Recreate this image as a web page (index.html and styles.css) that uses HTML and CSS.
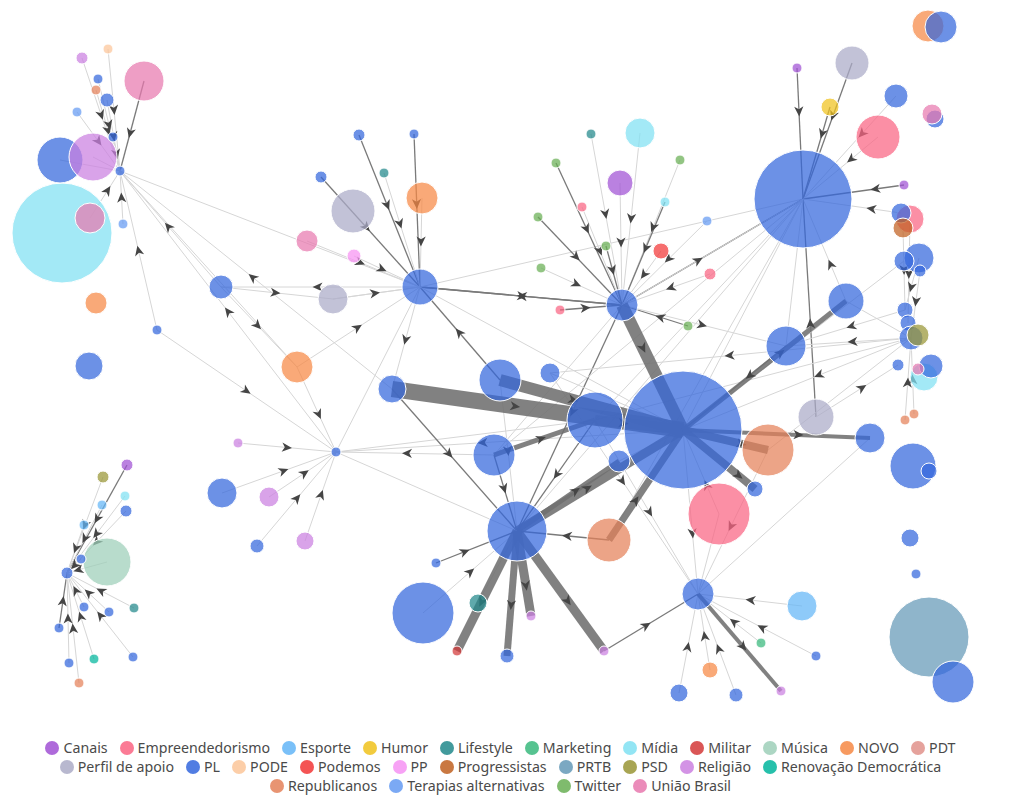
FILE: index.html
```html
<!DOCTYPE html>
<html lang="pt">
<head>
<meta charset="utf-8">
<title>Rede</title>
<link rel="stylesheet" href="styles.css">
</head>
<body>
<div class="page">
  <svg id="graph" class="graph" width="1015" height="737" viewBox="0 0 1015 737" xmlns="http://www.w3.org/2000/svg">
    <g id="edges"></g>
    <g id="arrows"></g>
    <g id="nodes"></g>
  </svg>
  <div class="legend">
    <div class="legend-row row1">
      <span class="item"><i class="dot canais"></i>Canais</span>
      <span class="item"><i class="dot emp"></i>Empreendedorismo</span>
      <span class="item"><i class="dot esp"></i>Esporte</span>
      <span class="item"><i class="dot humor"></i>Humor</span>
      <span class="item"><i class="dot life"></i>Lifestyle</span>
      <span class="item"><i class="dot mkt"></i>Marketing</span>
      <span class="item"><i class="dot midia"></i>Mídia</span>
      <span class="item"><i class="dot mil"></i>Militar</span>
      <span class="item"><i class="dot mus"></i>Música</span>
      <span class="item"><i class="dot novo"></i>NOVO</span>
      <span class="item"><i class="dot pdt"></i>PDT</span>
    </div>
    <div class="legend-row row2">
      <span class="item"><i class="dot perfil"></i>Perfil de apoio</span>
      <span class="item"><i class="dot pl"></i>PL</span>
      <span class="item"><i class="dot pode"></i>PODE</span>
      <span class="item"><i class="dot podemos"></i>Podemos</span>
      <span class="item"><i class="dot pp"></i>PP</span>
      <span class="item"><i class="dot prog"></i>Progressistas</span>
      <span class="item"><i class="dot prtb"></i>PRTB</span>
      <span class="item"><i class="dot psd"></i>PSD</span>
      <span class="item"><i class="dot rel"></i>Religião</span>
      <span class="item"><i class="dot renov"></i>Renovação Democrática</span>
    </div>
    <div class="legend-row row3">
      <span class="item"><i class="dot rep"></i>Republicanos</span>
      <span class="item"><i class="dot ter"></i>Terapias alternativas</span>
      <span class="item"><i class="dot tw"></i>Twitter</span>
      <span class="item"><i class="dot uniao"></i>União Brasil</span>
    </div>
  </div>
</div>
<script src="script.js"></script>
</body>
</html>
```
FILE: styles.css
```css
html, body {
  margin: 0;
  padding: 0;
  background: #ffffff;
}
.page {
  width: 1015px;
  height: 803px;
  overflow: hidden;
  font-family: "Noto Sans", "Open Sans", sans-serif;
}
.graph {
  display: block;
}
.edge-light { stroke: #d6d6d6; stroke-width: 1; fill: none; }
.edge-dark { stroke: #7a7a7a; stroke-width: 1.3; fill: none; }
.edge-thick { stroke: #707070; fill: none; opacity: 0.88; }
.arrow { fill: #454545; }
.node { stroke: #ffffff; stroke-width: 1; fill-opacity: 0.72; }

.legend {
  display: flex;
  flex-direction: column;
  align-items: center;
  color: #4a4a4a;
  font-size: 14.2px;
  line-height: 19px;
  padding-top: 1px;
}
.legend-row {
  display: flex;
  gap: 12px;
  justify-content: center;
  white-space: nowrap;
  margin-left: -14px;
}
.item {
  display: flex;
  align-items: center;
  gap: 4px;
}
.dot {
  display: inline-block;
  width: 14px;
  height: 14px;
  border-radius: 50%;
  opacity: 0.85;
}
.canais { background: #a050d4; }
.emp { background: #fa6482; }
.esp { background: #63b5f7; }
.humor { background: #f0c21c; }
.life { background: #21888b; }
.mkt { background: #38b97c; }
.midia { background: #80e0f2; }
.mil { background: #d33838; }
.mus { background: #9dcfb9; }
.novo { background: #f68844; }
.pdt { background: #e0928b; }
.perfil { background: #ababc7; }
.pl { background: #3366dd; }
.pode { background: #fcc599; }
.podemos { background: #f23636; }
.pp { background: #f692f3; }
.prog { background: #c06020; }
.prtb { background: #6499b7; }
.psd { background: #999535; }
.rel { background: #cb80e0; }
.renov { background: #00b59c; }
.rep { background: #e48159; }
.ter { background: #649af2; }
.tw { background: #68af53; }
.uniao { background: #e878ae; }
```
FILE: script.js
```js
(function () {
  var COLORS = {
    canais: '#a050d4', emp: '#fa6482', esp: '#63b5f7', humor: '#f0c21c',
    life: '#21888b', mkt: '#38b97c', midia: '#80e0f2', mil: '#d33838',
    mus: '#9dcfb9', novo: '#f68844', pdt: '#e0928b', perfil: '#ababc7',
    pl: '#3366dd', pode: '#fcc599', podemos: '#f23636', pp: '#f692f3',
    prog: '#c06020', prtb: '#6499b7', psd: '#999535', rel: '#cb80e0',
    renov: '#00b59c', rep: '#e48159', ter: '#649af2', tw: '#68af53',
    uniao: '#e878ae'
  };

  var NODES = [
    ['l1',62,233,50,'midia'],['l2',60,160,23,'pl'],['l3',93,157,24,'rel'],['l4',90,218,15,'uniao'],
    ['l0',120,171,5,'pl'],['l5',144,81,20,'uniao'],['l6',82,58,6,'rel'],['l7',108,49,5,'pode'],
    ['l8',98,79,5,'pl'],['l9',96,90,5,'rep'],['l10',107,100,7,'pl'],['l11',77,112,5,'ter'],
    ['l12',113,137,5,'pl'],['l13',123,224,5,'ter'],['l14',96,303,11,'novo'],['l15',157,330,5,'pl'],
    ['l16',89,366,14,'pl'],
    ['a',420,287,18,'pl'],['a1',333,299,15,'perfil'],['a2',307,241,11,'uniao'],['a3',354,256,7,'pp'],
    ['a4',353,211,22,'perfil'],['a5',321,177,6,'pl'],['a6',359,135,6,'pl'],['a7',414,134,5,'pl'],
    ['a8',384,173,5,'life'],['a9',422,198,16,'novo'],['a10',221,287,12,'pl'],['a11',297,367,16,'novo'],
    ['g',336,452,5,'pl'],['g1',238,443,5,'rel'],['g2',222,493,15,'pl'],['g3',269,497,10,'rel'],
    ['g4',257,546,7,'pl'],['g5',305,541,9,'rel'],
    ['m1',392,389,14,'pl'],['m2',500,380,21,'pl'],['m3',550,373,10,'pl'],['m4',595,420,28,'pl'],
    ['c',683,430,59,'pl'],['m5',494,455,21,'pl'],['m6',619,461,11,'pl'],['f',517,531,30,'pl'],
    ['f1',436,563,5,'pl'],['f2',423,613,31,'pl'],['f3',478,603,9,'life'],['f4',457,651,5,'mil'],
    ['f5',507,656,7,'pl'],['f6',531,616,5,'rel'],['f7',604,651,5,'rel'],['f8',609,540,22,'rep'],
    ['c1',719,514,31,'emp'],['c2',768,450,26,'rep'],['c3',755,489,8,'pl'],['c4',816,417,18,'perfil'],
    ['c5',870,438,15,'pl'],['c6',786,346,20,'pl'],['c7',846,301,18,'pl'],
    ['e',698,594,16,'pl'],['e1',802,606,15,'esp'],['e2',761,643,5,'mkt'],['e3',816,656,5,'pl'],
    ['e4',710,670,8,'novo'],['e5',679,693,9,'pl'],['e6',736,695,7,'pl'],['e7',781,691,5,'rel'],
    ['b',622,305,16,'pl'],['b1',640,133,15,'midia'],['b2',591,134,5,'life'],['b3',556,163,5,'tw'],
    ['b4',620,183,13,'canais'],['b5',680,160,5,'tw'],['b6',665,202,5,'midia'],['b7',582,207,5,'emp'],
    ['b8',538,217,5,'tw'],['b9',606,246,5,'tw'],['b10',707,221,5,'ter'],['b11',661,251,8,'podemos'],
    ['b12',541,268,5,'tw'],['b13',710,274,6,'emp'],['b14',560,310,5,'emp'],['b15',688,326,5,'tw'],
    ['d',803,199,49,'pl'],['d1',852,63,17,'perfil'],['d2',797,68,5,'canais'],['d3',830,107,9,'humor'],
    ['d4',878,137,22,'emp'],['d5',896,96,12,'pl'],['d6',928,26,16,'novo'],['d7',941,27,16,'pl'],
    ['d8',935,119,9,'pl'],['d9',932,114,10,'uniao'],['d10',904,185,5,'canais'],['d11',910,219,14,'emp'],
    ['d12',901,213,10,'pl'],['d13',903,228,10,'prog'],['d14',919,258,15,'pl'],['d15',904,261,10,'pl'],
    ['d16',920,271,6,'pl'],
    ['r1',905,310,8,'pl'],['r2',908,323,8,'pl'],['r3',911,338,12,'pl'],['r4',918,335,11,'psd'],
    ['r5',898,365,6,'pl'],['r6',924,377,14,'midia'],['r7',931,366,12,'pl'],['r8',918,369,6,'uniao'],
    ['r9',905,420,5,'rep'],['r10',914,414,5,'rep'],
    ['s1',913,466,23,'pl'],['s2',929,471,8,'pl'],['s3',910,538,9,'pl'],['s4',916,574,5,'pl'],
    ['s5',929,637,40,'prtb'],['s6',953,682,21,'pl'],
    ['h1',107,562,24,'mus'],['h',67,573,6,'pl'],['h2',127,465,6,'canais'],['h3',103,477,6,'psd'],
    ['h4',125,496,5,'midia'],['h5',102,505,5,'esp'],['h6',126,511,6,'pl'],['h7',84,525,5,'esp'],
    ['h8',81,559,5,'pl'],['h9',84,607,5,'pl'],['h10',109,612,5,'pl'],['h11',134,608,5,'life'],
    ['h12',59,628,5,'pl'],['h13',133,657,5,'pl'],['h14',94,659,5,'renov'],['h15',69,663,5,'pl'],
    ['h16',79,683,5,'rep']
  ];

  // [source, target, style] style: 'l' light, 'd' dark, number = thick width. Suffix '-' = no arrow
  var EDGES = [
    ['l5','l0','d'],['l6','l0','l'],['l7','l0','l'],['l8','l0','l'],['l9','l0','l'],['l10','l0','l'],
    ['l11','l0','l'],['l12','l0','l'],['l3','l0','l-'],['l2','l0','l-'],['l4','l0','l'],['l13','l0','l'],
    ['l15','l0','l'],['a10','l0','l'],['g','l0','l'],['m1','l0','l'],['a','l0','l-'],['a11','l0','l-'],
    ['l15','g','l'],
    ['a5','a','d'],['a6','a','d'],['a7','a','d'],['a8','a','l'],['a9','a','l'],['a2','a','l'],
    ['a3','a','l'],['a1','a','l'],['a','a10','l'],['a11','a','l'],['m2','a','d'],['a','b','d'],
    ['b','a','d'],['a','m1','l'],['a','d','l-'],['a','c','l-'],['a10','a11','l'],['a10','a1','l'],
    ['a','a1','l-'],
    ['g1','g','l'],['g2','g','l'],['g3','g','l'],['g4','g','l'],['g5','g','l'],['a11','g','l'],
    ['m5','g','l'],['g','a','l-'],['m4','g','l-'],['c','g','l'],['f','g','l-'],
    ['b1','b','l'],['b2','b','l'],['b3','b','d'],['b4','b','l'],['b5','b','l'],['b6','b','d'],
    ['b7','b','l'],['b8','b','d'],['b9','b','d'],['b10','b','l'],['b11','b','l'],['b12','b','l'],
    ['b13','b','l'],['b14','b','d'],['b15','b','d'],['b','d','d'],['b','f','d'],['m5','b','l-'],
    ['b','c6','l'],['d','b','l-'],
    ['d2','d','d'],['d3','d','d'],['d1','d','d'],['d4','d','l'],['d5','d','l'],['d10','d','d'],
    ['d12','d','l'],['c7','d','l'],['c4','d','d'],['d','c','l-'],['d','m4','l-'],['d','f','l-'],
    ['d','m5','l-'],['d','f8','l-'],['d','c6','l-'],
    ['d11','r2','l'],['d14','r1','l'],['d16','r3','l'],['d13','r1','l'],['r9','r3','l'],['r10','r3','l'],
    ['r3','c6','l'],['r3','c','l'],['r3','m3','l'],['r3','c7','l-'],['c4','r5','l'],['r3','m4','l-'],
    ['d15','c','l-'],['r1','c6','l'],['c2','r3','l-'],
    ['m1','c',16],['m2','c',12],['m4','c',10],['b','c',12],['f','c',9],['f8','c',7],['c','c3',8],
    ['c','c2',8],['c','c5',4],['c','c7',5],['c6','c','d'],['m6','c','l-'],['c1','c','l'],['c','e','l'],
    ['m3','c','l-'],
    ['f1','f','d'],['f2','f','l'],['f','f4',9],['f','f5',7],['f','f6',9],['f','f7',9],['f8','f','d'],
    ['m5','f','d'],['m1','f','d'],['m4','f','d'],['f','m6',5],['m2','f','l'],['m5','m4',5],['f3','f','l-'],
    ['e1','e','l'],['e2','e','l'],['e3','e','l'],['e4','e','l'],['e5','e','l'],['e6','e','l'],
    ['e','e7',4],['f7','e','d'],['c1','e','l-'],['c2','e','l'],['m4','e','l'],['m3','e','l'],
    ['c5','e','l-'],
    ['h2','h','d'],['h3','h','l'],['h4','h','l'],['h5','h','l'],['h6','h','l'],['h7','h','l'],
    ['h8','h','l'],['h1','h','l'],['h9','h','l'],['h10','h','l'],['h11','h','l'],['h12','h','d'],
    ['h13','h','l'],['h14','h','l'],['h15','h','l'],['h16','h','l']
  ];

  var NS = 'http://www.w3.org/2000/svg';
  var map = {};
  NODES.forEach(function (n) { map[n[0]] = { x: n[1], y: n[2], r: n[3], c: n[4] }; });

  var gEdges = document.getElementById('edges');
  var gArrows = document.getElementById('arrows');
  var gNodes = document.getElementById('nodes');

  function el(name, attrs) {
    var e = document.createElementNS(NS, name);
    for (var k in attrs) e.setAttribute(k, attrs[k]);
    return e;
  }

  var thick = [], thin = [];
  EDGES.forEach(function (e) {
    if (typeof e[2] === 'number') thick.push(e); else thin.push(e);
  });

  function draw(e) {
    var s = map[e[0]], t = map[e[1]];
    if (!s || !t) return;
    var style = e[2];
    var noArrow = typeof style === 'string' && style.indexOf('-') >= 0;
    var line = el('line', { x1: s.x, y1: s.y, x2: t.x, y2: t.y });
    if (typeof style === 'number') {
      line.setAttribute('class', 'edge-thick');
      line.setAttribute('stroke-width', style);
    } else if (style.charAt(0) === 'd') {
      line.setAttribute('class', 'edge-dark');
    } else {
      line.setAttribute('class', 'edge-light');
    }
    gEdges.appendChild(line);
    if (noArrow) return;
    var dx = t.x - s.x, dy = t.y - s.y;
    var len = Math.sqrt(dx * dx + dy * dy) || 1;
    var ux = dx / len, uy = dy / len;
    var sx = s.x + ux * s.r, sy = s.y + uy * s.r;
    var tx = t.x - ux * t.r, ty = t.y - uy * t.r;
    var mx = (sx + tx) / 2, my = (sy + ty) / 2;
    var ang = Math.atan2(dy, dx) * 180 / Math.PI;
    gArrows.appendChild(el('path', {
      d: 'M5,0 L-5,-4.6 L-2.2,0 L-5,4.6 Z',
      'class': 'arrow',
      transform: 'translate(' + mx.toFixed(1) + ',' + my.toFixed(1) + ') rotate(' + ang.toFixed(1) + ')'
    }));
  }
  thin.forEach(draw);
  thick.forEach(draw);

  NODES.forEach(function (n) {
    gNodes.appendChild(el('circle', {
      cx: n[1], cy: n[2], r: n[3], 'class': 'node', fill: COLORS[n[4]]
    }));
  });
})();
```
